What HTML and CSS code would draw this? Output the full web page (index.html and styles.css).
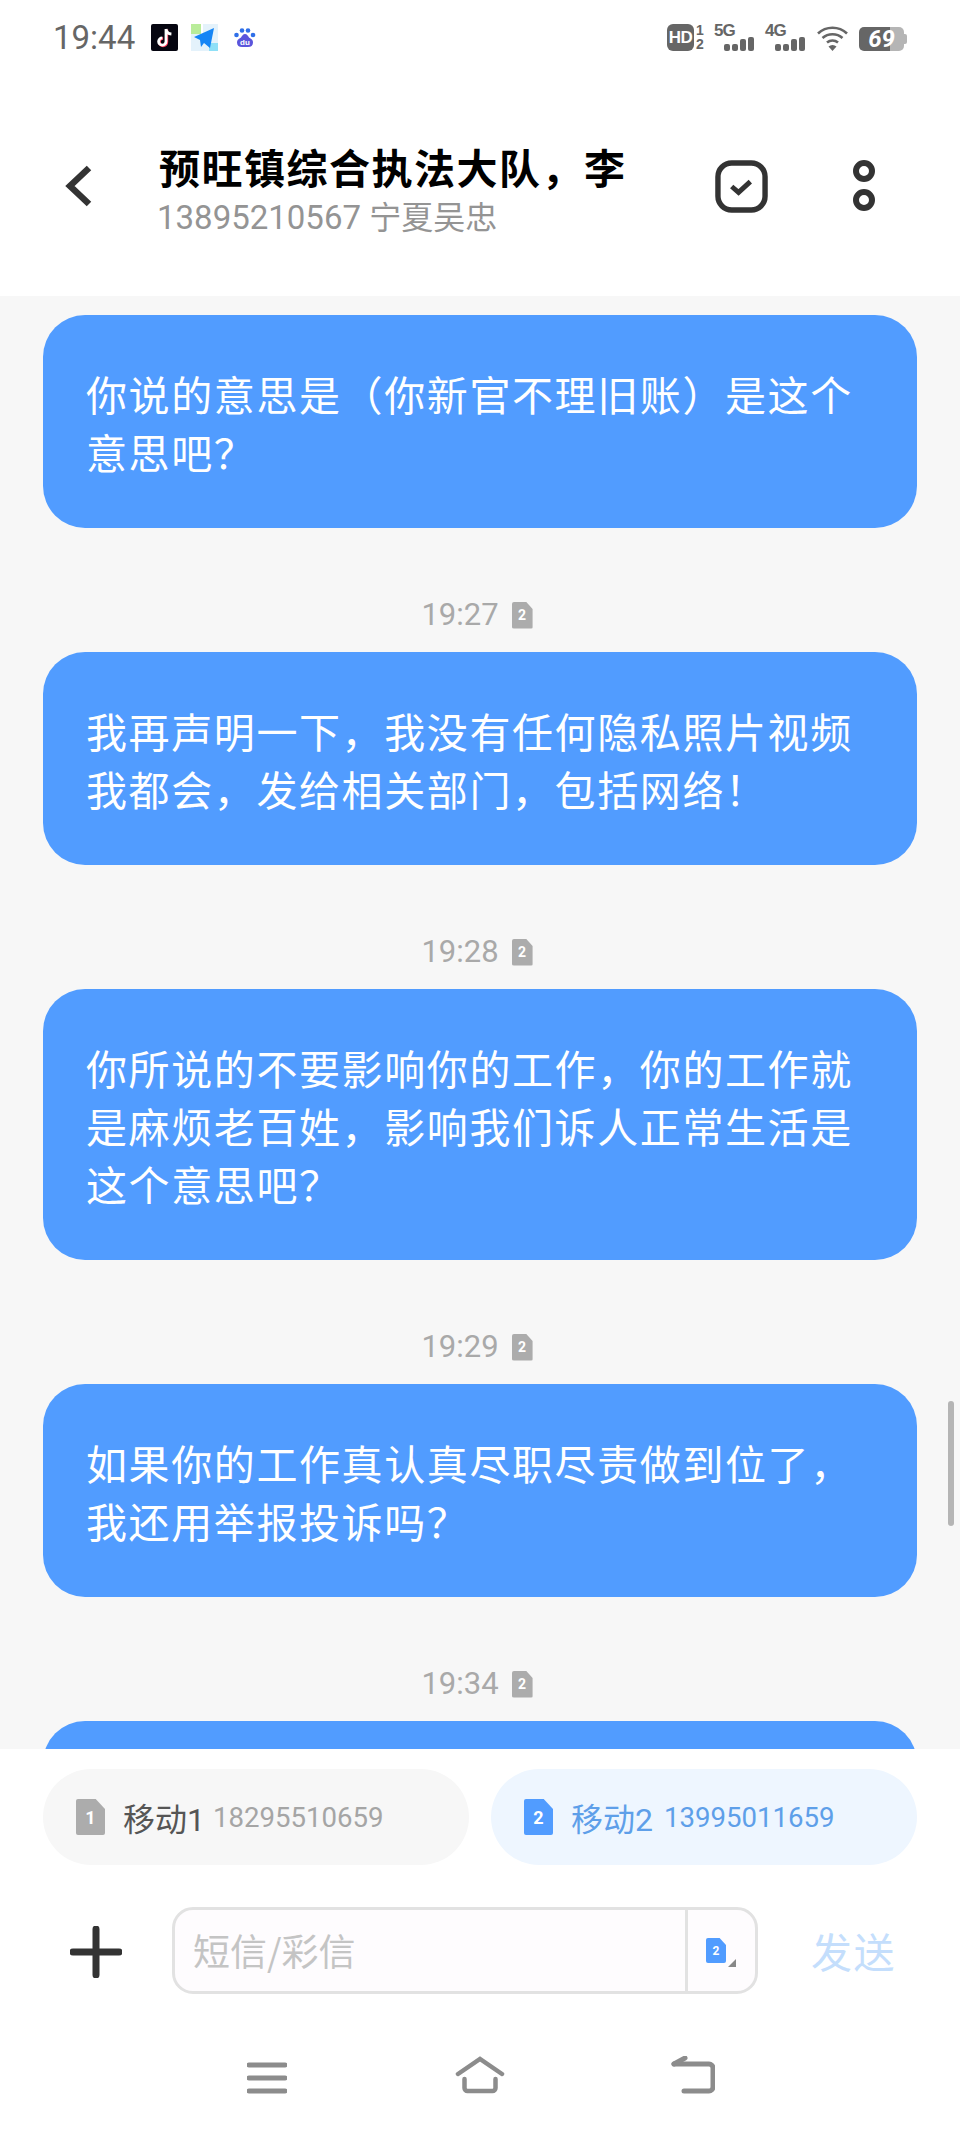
FILE: index.html
```html
<!DOCTYPE html>
<html>
<head>
    <title>预旺镇综合执法大队</title>
    <link rel="stylesheet" href="styles.css">
</head>
<body>
    <div class="screen">
        <!-- status bar -->
        <div class="status">
            <div class="status-left">
                <span class="clock">19:44</span>
                <svg class="notif" viewBox="0 0 27 27"><rect width="27" height="27" rx="2" fill="#050510"/><path d="M15 5v12.500a3.700 3.700 0 1 1-3.700-3.700" fill="none" stroke="#ff3b5c" stroke-width="2.800" transform="translate(.8 .6)"/><path d="M15 5v12.500a3.700 3.700 0 1 1-3.700-3.700M15 5c.4 3 2.400 4.800 5.400 5" fill="none" stroke="#fff" stroke-width="2.800"/></svg>
                <svg class="notif" viewBox="0 0 27 27"><rect width="10" height="10" fill="#b9ec9a"/><rect y="10" width="27" height="17" fill="#e4f2fb"/><rect x="12" width="15" height="10" fill="#e4f2fb"/><rect x="18" y="19" width="9" height="8" fill="#8fe0f7"/><path d="M3 13L23 4l-4 20-6-5-3 4-1-7z" fill="#1585f5"/></svg>
                <svg class="notif" viewBox="0 0 27 27"><circle cx="5.500" cy="11" r="2.300" fill="#2f6fe8"/><circle cx="11" cy="6.500" r="2.300" fill="#2f6fe8"/><circle cx="17" cy="6.500" r="2.300" fill="#2f6fe8"/><circle cx="22" cy="11" r="2.300" fill="#2f6fe8"/><path d="M14 10c-2 0-3 2-4 3.500-3 1.500-4 3-4 5 0 3 2 4.500 5 4.500h6c3 0 5-1.500 5-4.500 0-2-1-3.500-4-5-1-1.500-2-3.500-4-3.500z" fill="#5a55dc"/><text class="paw-du" x="14" y="21">du</text></svg>
            </div>
            <div class="status-right">
                <span class="hd">HD</span>
                <span class="sim-nums"><span>1</span><span>2</span></span>
                <div class="net">
                    <span class="net-label">5G</span>
                    <div class="bars"><i class="b1"></i><i class="b2"></i><i class="b3"></i><i class="b4"></i></div>
                </div>
                <div class="net">
                    <span class="net-label">4G</span>
                    <div class="bars"><i class="b1"></i><i class="b2"></i><i class="b3"></i><i class="b4"></i></div>
                </div>
                <svg class="wifi" viewBox="0 0 33 27"><path d="M2 9.500a21 21 0 0 1 29 0M6.500 14a15 15 0 0 1 20 0M11 18.500a8.500 8.500 0 0 1 11 0" fill="none" stroke="#666" stroke-width="2.600"/><path d="M16.500 27l-4-4.500a6 6 0 0 1 8 0z" fill="#666"/></svg>
                <div class="battery"><span class="batt-num">69</span></div>
            </div>
        </div>

        <!-- title bar -->
        <div class="topbar">
            <svg class="back" viewBox="0 0 28 44"><path d="M24 4L5 22l19 18" fill="none" stroke="#333" stroke-width="6.500"/></svg>
            <div class="contact">
                <div class="contact-name">预旺镇综合执法大队，李</div>
                <div class="contact-sub">13895210567 <span class="contact-region">宁夏吴忠</span></div>
            </div>
            <svg class="check" viewBox="0 0 54 54"><rect x="3" y="3" width="48" height="48" rx="14" fill="none" stroke="#333" stroke-width="5.500"/><path d="M17 27l7 6 12-11" fill="none" stroke="#333" stroke-width="5"/></svg>
            <svg class="more" viewBox="0 0 22 52"><circle cx="11" cy="11" r="8" fill="none" stroke="#333" stroke-width="6"/><circle cx="11" cy="40" r="8" fill="none" stroke="#333" stroke-width="6"/></svg>
        </div>

        <!-- messages -->
        <div class="thread">
            <div class="bubble">你说的意思是（你新官不理旧账）是这个意思吧？</div>
            <div class="stamp"><span>19:27</span><span class="sim-tag">2</span></div>
            <div class="bubble">我再声明一下，我没有任何隐私照片视频我都会，发给相关部门，包括网络！</div>
            <div class="stamp"><span>19:28</span><span class="sim-tag">2</span></div>
            <div class="bubble">你所说的不要影响你的工作，你的工作就是麻烦老百姓，影响我们诉人正常生活是这个意思吧？</div>
            <div class="stamp"><span>19:29</span><span class="sim-tag">2</span></div>
            <div class="bubble">如果你的工作真认真尽职尽责做到位了，我还用举报投诉吗？</div>
            <div class="stamp"><span>19:34</span><span class="sim-tag">2</span></div>
            <div class="bubble bubble-cut"></div>
            <div class="scrollbar"></div>
        </div>

        <!-- bottom part -->
        <div class="footer">
            <div class="sim-row">
                <div class="sim-btn">
                    <span class="sim-tag sim-big">1</span>
                    <span class="sim-name">移动1</span>
                    <span class="sim-number">18295510659</span>
                </div>
                <div class="sim-btn sim-active">
                    <span class="sim-tag sim-big">2</span>
                    <span class="sim-name">移动2</span>
                    <span class="sim-number">13995011659</span>
                </div>
            </div>
            <div class="input-row">
                <svg class="plus" viewBox="0 0 52 52"><path d="M26 3v46M3 26h46" stroke="#333" stroke-width="7" stroke-linecap="round"/></svg>
                <div class="input-box">
                    <div class="input-text">短信/彩信</div>
                    <div class="input-sim">
                        <span class="sim-tag sim-small">2</span>
                        <span class="corner"></span>
                    </div>
                </div>
                <div class="send">发送</div>
            </div>
            <div class="navbar">
                <svg class="nav-menu" viewBox="0 0 40 32"><path d="M2 3h36M2 16h36M2 29h36" stroke="#8c8c8c" stroke-width="5" stroke-linecap="round"/></svg>
                <svg class="nav-home" viewBox="0 0 50 38"><path d="M3 18L25 3l22 15M9.500 23v9a3 3 0 0 0 3 3h25a3 3 0 0 0 3-3v-9" fill="none" stroke="#8c8c8c" stroke-width="4.500" stroke-linecap="round"/></svg>
                <svg class="nav-back" viewBox="0 0 44 38"><path d="M3 8h35a4 4 0 0 1 4 4v19a4 4 0 0 1-4 4H13" fill="none" stroke="#8c8c8c" stroke-width="5" stroke-linecap="round"/><path d="M3 8l11-6" fill="none" stroke="#8c8c8c" stroke-width="5" stroke-linecap="round"/></svg>
            </div>
        </div>
    </div>
</body>
</html>
```

FILE: styles.css
```css
* {
    box-sizing: border-box;
}
body {
    margin: 0;
    background: #fff;
    font-family: "Noto Sans CJK SC", "Noto Sans", sans-serif;
}
.screen {
    width: 960px;
    height: 2133px;
    display: flex;
    flex-direction: column;
    overflow: hidden;
}

/* status bar */
.status {
    height: 76px;
    padding: 24px 53px 0;
    display: flex;
    justify-content: space-between;
    align-items: flex-start;
}
.status-left {
    display: flex;
    align-items: center;
    gap: 13px;
}
.clock {
    font-family: Roboto, sans-serif;
    font-size: 33px;
    line-height: 27px;
    color: #666;
    width: 85px;
}
.notif {
    width: 27px;
    height: 27px;
}
.paw-du {
    font: 700 8px "Liberation Sans", sans-serif;
    fill: #fff;
    text-anchor: middle;
}
.status-right {
    display: flex;
    align-items: flex-end;
    height: 27px;
}
.hd {
    width: 27px;
    height: 27px;
    background: #666;
    border-radius: 6px;
    color: #fff;
    font: 700 17px/27px "Liberation Sans", sans-serif;
    text-align: center;
    letter-spacing: -0.5px;
}
.sim-nums {
    display: flex;
    flex-direction: column;
    width: 10px;
    margin-left: 1px;
    color: #666;
    font: 700 14px/13.5px "Liberation Sans", sans-serif;
    text-align: center;
}
.net {
    width: 40px;
    margin-left: 9px;
    height: 27px;
    display: flex;
    flex-direction: column;
    justify-content: space-between;
}
.net + .net {
    margin-left: 11px;
}
.net-label {
    color: #666;
    font: 700 17px/13px "Liberation Sans", sans-serif;
    height: 13px;
    letter-spacing: -1px;
}
.bars {
    display: flex;
    align-items: flex-end;
    justify-content: flex-end;
    gap: 2px;
    height: 14px;
}
.bars i {
    width: 6px;
    background: #666;
    border-radius: 2px;
}
.b1, .b2 {
    height: 7px;
}
.b3 {
    height: 12px;
}
.b4 {
    height: 14px;
}
.wifi {
    width: 33px;
    height: 27px;
    margin-left: 11px;
}
.battery {
    width: 45px;
    height: 24px;
    margin-left: 10px;
    margin-right: 3px;
    border-radius: 5px;
    background: linear-gradient(to right, #666 0 69%, #b5b5b5 69% 100%);
    color: #fff;
    text-align: center;
    position: relative;
}
.battery::after {
    content: "";
    position: absolute;
    right: -3px;
    top: 7px;
    width: 3px;
    height: 10px;
    background: #b5b5b5;
    border-radius: 0 2px 2px 0;
}
.batt-num {
    font: italic 700 24px/24px Roboto, sans-serif;
}

/* title bar */
.topbar {
    height: 220px;
    padding-left: 65px;
    display: flex;
    align-items: center;
}
.back {
    width: 28px;
    height: 44px;
}
.contact {
    width: 540px;
    margin-left: 64px;
    margin-top: 6px;
}
.contact-name {
    font-size: 41px;
    line-height: 46px;
    font-weight: 700;
    color: #000;
    white-space: nowrap;
    letter-spacing: 1.5px;
    margin-left: 2px;
    margin-bottom: 8px;
}
.contact-sub {
    font-family: Roboto, sans-serif;
    font-size: 33px;
    line-height: 36px;
    color: #949494;
    white-space: nowrap;
}
.contact-region {
    font-family: "Noto Sans CJK SC", sans-serif;
    font-size: 32px;
}
.check {
    width: 53px;
    height: 53px;
    margin-left: 18px;
}
.more {
    width: 22px;
    height: 52px;
    margin-left: 85px;
}

/* messages */
.thread {
    flex: 1;
    min-height: 0;
    overflow: hidden;
    background: #f7f7f7;
    padding: 19px 43px 0;
    position: relative;
}
.bubble {
    background: #519cff;
    color: #fff;
    border-radius: 42px;
    padding: 49px 40px 48px 43px;
    font-size: 41px;
    line-height: 58px;
    letter-spacing: 1.6px;
}
.bubble-cut {
    height: 200px;
}
.stamp {
    height: 124px;
    display: flex;
    justify-content: center;
    align-items: center;
    gap: 13px;
    padding-top: 50px;
    padding-right: 6px;
    color: #a9a9a9;
    font-family: Roboto, sans-serif;
    font-size: 31px;
    line-height: 40px;
}
.sim-tag {
    width: 21px;
    height: 27px;
    background: #acacac;
    color: #fff;
    font: 700 14px/27px Roboto, sans-serif;
    text-align: center;
    clip-path: polygon(0 0, 68% 0, 100% 28%, 100% 100%, 0 100%);
    border-radius: 2px;
    display: block;
}
.scrollbar {
    position: absolute;
    right: 6px;
    top: 1105px;
    width: 6px;
    height: 125px;
    background: #b5b5b5;
    border-radius: 3px;
}

/* bottom */
.footer {
    height: 384px;
    background: #fff;
    display: flex;
    flex-direction: column;
}
.sim-row {
    display: flex;
    gap: 22px;
    padding: 20px 43px 0;
}
.sim-btn {
    flex: 1;
    height: 96px;
    border-radius: 48px;
    background: #f7f7f7;
    display: flex;
    align-items: center;
    padding-left: 33px;
}
.sim-active {
    background: #eef6ff;
}
.sim-big {
    width: 29px;
    height: 36px;
    font-size: 18px;
    line-height: 38px;
    margin-right: 18px;
}
.sim-name {
    font-family: Roboto, "Noto Sans CJK SC", sans-serif;
    font-size: 32px;
    color: #555;
    margin-right: 8px;
    white-space: nowrap;
}
.sim-number {
    font-family: Roboto, sans-serif;
    font-size: 27.6px;
    color: #a5a5a5;
}
.sim-active .sim-big {
    background: #519cff;
}
.sim-active .sim-name, .sim-active .sim-number {
    color: #5e9fe9;
}
.sim-active .sim-name {
    margin-right: 11px;
}
.input-row {
    display: flex;
    align-items: flex-start;
    padding: 42px 0 0 70px;
    height: 170px;
}
.plus {
    width: 52px;
    height: 52px;
    margin-top: 19px;
}
.input-box {
    width: 586px;
    height: 87px;
    margin-left: 50px;
    border: 3px solid #e2e2e2;
    border-radius: 21px;
    background: #fefcfe;
    display: flex;
}
.input-text {
    flex: 1;
    font-size: 37px;
    line-height: 81px;
    padding-left: 18px;
    color: #c4c4c4;
}
.input-sim {
    width: 70px;
    border-left: 3px solid #e2e2e2;
    display: flex;
    align-items: center;
    padding-left: 18px;
    position: relative;
}
.sim-small {
    width: 20px;
    height: 25px;
    background: #519cff;
    font-size: 12px;
    line-height: 26px;
}
.corner {
    position: absolute;
    right: 19px;
    bottom: 24px;
    border-style: solid;
    border-width: 0 0 8px 8px;
    border-color: transparent transparent #888 transparent;
}
.send {
    font-size: 41px;
    line-height: 87px;
    color: #c4defc;
    margin-left: 53px;
    letter-spacing: 1.5px;
}
.navbar {
    display: flex;
    align-items: flex-end;
    padding-left: 247px;
    margin-top: 21px;
    height: 38px;
}
.nav-menu {
    width: 40px;
    height: 32px;
}
.nav-home {
    width: 50px;
    height: 38px;
    margin-left: 168px;
}
.nav-back {
    width: 44px;
    height: 38px;
    margin-left: 166px;
}
```
